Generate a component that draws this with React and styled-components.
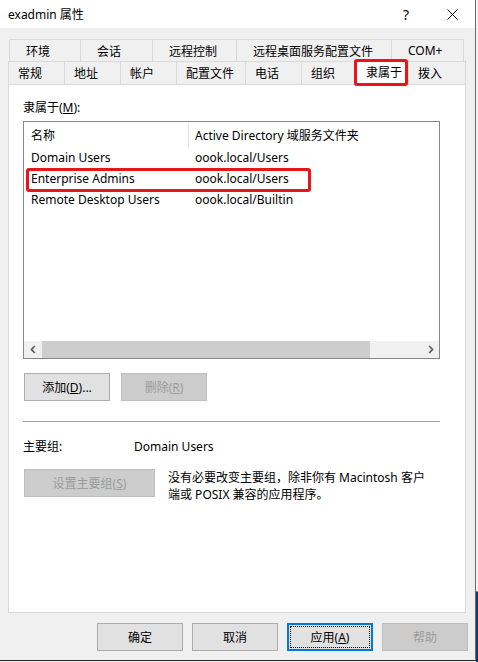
import React from "react";
import styled, { createGlobalStyle } from "styled-components";

const Global = createGlobalStyle`
  html, body { margin: 0; padding: 0; }
  body {
    width: 478px;
    height: 662px;
    overflow: hidden;
    background: #f0f0f0;
    font-family: "Noto Sans", "Noto Sans CJK SC", sans-serif;
    font-size: 12px;
    color: #000;
  }
`;

const Screen = styled.div`
  display: flex;
  width: 478px;
  height: 662px;
`;

const Window = styled.div`
  box-sizing: border-box;
  width: 476px;
  height: 661px;
  border-right: 1px solid #6b6b6b;
  border-bottom: 1px solid #262626;
  display: flex;
  flex-direction: column;
  background: #f0f0f0;
`;

const Side = styled.div`
  flex: 1;
  display: flex;
  flex-direction: column;
`;

const SideTop = styled.div`
  height: 591px;
  background: #f3f3f3;
  border-bottom: 1px solid #8a8a8a;
`;

const SideBottom = styled.div`
  flex: 1;
  background: #0d3b6b;
`;

const TitleBar = styled.div`
  height: 28px;
  background: #fff;
  display: flex;
  align-items: center;
  padding-left: 8px;
`;

const Title = styled.div`
  flex: 1;
  font-size: 12px;
`;

const TitleButton = styled.div`
  width: 46px;
  height: 28px;
  display: flex;
  align-items: center;
  justify-content: center;
  font-size: 14px;
`;

const Body = styled.div`
  flex: 1;
  display: flex;
  flex-direction: column;
  padding: 11px 0 0 8px;
`;

const TabRow = styled.div`
  display: flex;
  align-items: flex-end;
  height: ${(p) => p.$h}px;
  margin-left: ${(p) => p.$offset}px;
`;

const Tab = styled.div`
  box-sizing: border-box;
  width: ${(p) => p.$w}px;
  height: 100%;
  flex: none;
  border-top: 1px solid #d9d9d9;
  border-left: 1px solid #d9d9d9;
  border-right: ${(p) => (p.$last ? "1px solid #d9d9d9" : "none")};
  padding-left: ${(p) => p.$pad}px;
  display: flex;
  align-items: center;
  white-space: nowrap;
  background: #f0f0f0;
`;

const ActiveTab = styled.div`
  position: relative;
  z-index: 2;
  box-sizing: border-box;
  width: ${(p) => p.$w}px;
  height: 26px;
  flex: none;
  margin-bottom: -1px;
  border: 1px solid #d9d9d9;
  border-bottom: none;
  padding-left: 11px;
  padding-bottom: 1px;
  display: flex;
  align-items: center;
  white-space: nowrap;
  background: #fff;
`;

const Highlight = styled.span`
  position: absolute;
  box-sizing: border-box;
  border: 3px solid #e8161b;
  border-radius: 3px;
  pointer-events: none;
  left: ${(p) => p.$l}px;
  top: ${(p) => p.$t}px;
  width: ${(p) => p.$w}px;
  height: ${(p) => p.$h}px;
`;

const Panel = styled.div`
  position: relative;
  z-index: 1;
  box-sizing: border-box;
  width: 458px;
  height: 529px;
  border: 1px solid #d9d9d9;
  background: #fff;
  padding: 15px 0 0 14px;
  display: flex;
  flex-direction: column;
`;

const Label = styled.div`
  line-height: 16px;
  height: 16px;
  white-space: nowrap;
`;

const ListView = styled.div`
  box-sizing: border-box;
  margin-top: 5px;
  width: 417px;
  height: 238px;
  border: 1px solid #828790;
  display: flex;
  flex-direction: column;
`;

const ListHeader = styled.div`
  height: 25px;
  display: flex;
  align-items: center;
`;

const HeaderDivider = styled.div`
  width: 1px;
  height: 24px;
  background: #e5e5e5;
  align-self: flex-start;
  margin-top: 1px;
`;

const ListRow = styled.div`
  position: relative;
  height: 21px;
  display: flex;
  align-items: center;
`;

const Cell = styled.div`
  box-sizing: border-box;
  width: ${(p) => (p.$w ? `${p.$w}px` : "auto")};
  padding-left: ${(p) => p.$pad}px;
  white-space: nowrap;
  flex: none;
`;

const Spacer = styled.div`
  flex: 1;
`;

const HScroll = styled.div`
  height: 17px;
  display: flex;
  align-items: stretch;
  background: #f0f0f0;
`;

const ScrollArrow = styled.div`
  width: 17px;
  display: flex;
  align-items: center;
  justify-content: center;
  flex: none;
`;

const Track = styled.div`
  flex: 1;
  display: flex;
  align-items: stretch;
`;

const Thumb = styled.div`
  width: 328px;
  margin-left: 1px;
  background: #cdcdcd;
`;

const ButtonRow = styled.div`
  display: flex;
  gap: ${(p) => p.$gap}px;
  margin-top: ${(p) => p.$mt}px;
  margin-left: ${(p) => p.$ml || 0}px;
  justify-content: ${(p) => p.$justify || "flex-start"};
  padding-right: ${(p) => p.$pr || 0}px;
`;

const Button = styled.button`
  box-sizing: border-box;
  width: ${(p) => p.$w || 86}px;
  height: 28px;
  padding: 0;
  margin: 0;
  font: inherit;
  font-size: 12px;
  display: flex;
  align-items: center;
  justify-content: center;
  border: ${(p) => (p.$default ? "2px solid #0078d7" : "1px solid #adadad")};
  background: #e1e1e1;
  color: #000;
  outline: ${(p) => (p.$default ? "1px dotted #000" : "none")};
  outline-offset: -4px;
  &:disabled {
    background: #cccccc;
    border-color: #bfbfbf;
    color: #9c9c9c;
  }
`;

const Separator = styled.div`
  margin-top: 20px;
  width: 417px;
  height: 1px;
  background: #a0a0a0;
`;

const InfoRow = styled.div`
  margin-top: 17px;
  display: flex;
  line-height: 16px;
`;

const InfoLabel = styled.div`
  width: 111px;
`;

const SetRow = styled.div`
  margin-top: 14px;
  display: flex;
  align-items: flex-start;
  margin-left: 1px;
`;

const Description = styled.div`
  margin-left: 13px;
  line-height: 17px;
  white-space: nowrap;
`;

const ChevronLeft = () => (
  <svg width="6" height="9" viewBox="0 0 6 9">
    <path d="M4.8 1 L1.5 4.5 L4.8 8" fill="none" stroke="#606060" strokeWidth="1.8" />
  </svg>
);

const ChevronRight = () => (
  <svg width="6" height="9" viewBox="0 0 6 9">
    <path d="M1.2 1 L4.5 4.5 L1.2 8" fill="none" stroke="#606060" strokeWidth="1.8" />
  </svg>
);

const CloseIcon = () => (
  <svg width="11" height="11" viewBox="0 0 11 11">
    <path d="M0.5 0.5 L10.5 10.5 M10.5 0.5 L0.5 10.5" stroke="#000" strokeWidth="1" />
  </svg>
);

const topTabs = [
  { label: "环境", w: 71 },
  { label: "会话", w: 72 },
  { label: "远程控制", w: 84 },
  { label: "远程桌面服务配置文件", w: 155 },
  { label: "COM+", w: 73, last: true },
];

const bottomTabs = [
  { label: "常规", w: 56 },
  { label: "地址", w: 56 },
  { label: "帐户", w: 56 },
  { label: "配置文件", w: 69 },
  { label: "电话", w: 56 },
  { label: "组织", w: 53 },
  { label: "隶属于", w: 54, active: true },
  { label: "拨入", w: 58, last: true },
];

const rows = [
  { name: "Domain Users", path: "oook.local/Users" },
  { name: "Enterprise Admins", path: "oook.local/Users", mark: true },
  { name: "Remote Desktop Users", path: "oook.local/Builtin" },
];

export default function App() {
  return (
    <>
      <Global />
      <Screen>
        <Window>
          <TitleBar>
            <Title>exadmin 属性</Title>
            <TitleButton>?</TitleButton>
            <TitleButton>
              <CloseIcon />
            </TitleButton>
          </TitleBar>
          <Body>
            <TabRow $h={22} $offset={1}>
              {topTabs.map((t) => (
                <Tab key={t.label} $w={t.w} $pad={16} $last={t.last}>
                  {t.label}
                </Tab>
              ))}
            </TabRow>
            <TabRow $h={23} $offset={0}>
              {bottomTabs.map((t) =>
                t.active ? (
                  <ActiveTab key={t.label} $w={t.w}>
                    {t.label}
                    <Highlight $l={-1} $t={-1} $w={t.w} $h={27} />
                  </ActiveTab>
                ) : (
                  <Tab key={t.label} $w={t.w} $pad={9} $last={t.last}>
                    {t.label}
                  </Tab>
                )
              )}
            </TabRow>
            <Panel>
              <Label>
                隶属于(<u>M</u>):
              </Label>
              <ListView>
                <ListHeader>
                  <Cell $w={164} $pad={7}>名称</Cell>
                  <HeaderDivider />
                  <Cell $pad={6}>Active Directory 域服务文件夹</Cell>
                </ListHeader>
                {rows.map((r) => (
                  <ListRow key={r.name}>
                    <Cell $w={165} $pad={7}>{r.name}</Cell>
                    <Cell $pad={6}>{r.path}</Cell>
                    {r.mark && <Highlight $l={2} $t={0} $w={285} $h={24} />}
                  </ListRow>
                ))}
                <Spacer />
                <HScroll>
                  <ScrollArrow>
                    <ChevronLeft />
                  </ScrollArrow>
                  <Track>
                    <Thumb />
                  </Track>
                  <ScrollArrow>
                    <ChevronRight />
                  </ScrollArrow>
                </HScroll>
              </ListView>
              <ButtonRow $gap={11} $mt={14} $ml={1}>
                <Button>
                  添加(<u>D</u>)...
                </Button>
                <Button disabled>
                  删除(<u>R</u>)
                </Button>
              </ButtonRow>
              <Separator />
              <InfoRow>
                <InfoLabel>主要组:</InfoLabel>
                <div>Domain Users</div>
              </InfoRow>
              <SetRow>
                <Button $w={131} disabled>
                  设置主要组(<u>S</u>)
                </Button>
                <Description>
                  没有必要改变主要组，除非你有 Macintosh 客户
                  <br />
                  端或 POSIX 兼容的应用程序。
                </Description>
              </SetRow>
            </Panel>
            <ButtonRow $gap={9} $mt={10} $justify="flex-end" $pr={7}>
              <Button>确定</Button>
              <Button>取消</Button>
              <Button $default>
                应用(<u>A</u>)
              </Button>
              <Button disabled>帮助</Button>
            </ButtonRow>
          </Body>
        </Window>
        <Side>
          <SideTop />
          <SideBottom />
        </Side>
      </Screen>
    </>
  );
}
